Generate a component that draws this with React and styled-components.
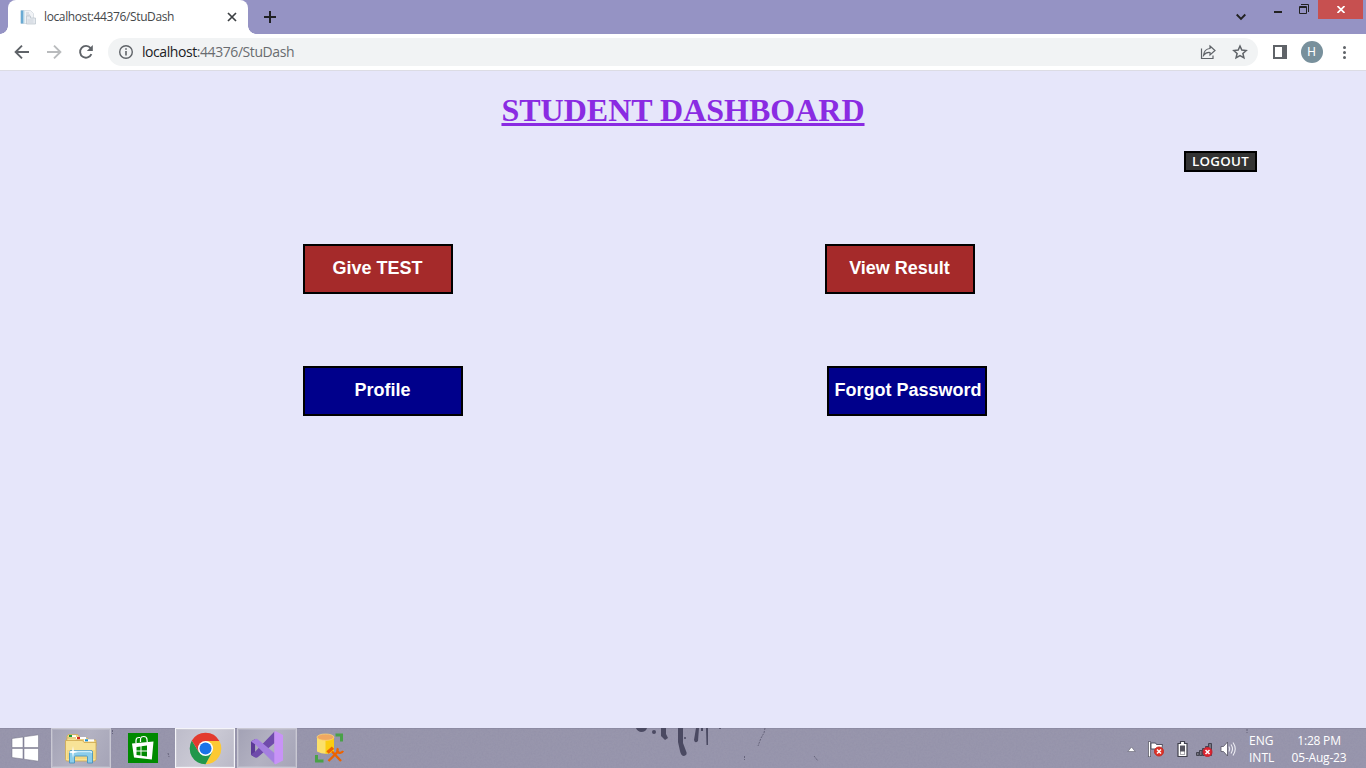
import React from "react";
import styled, { createGlobalStyle } from "styled-components";

const GlobalStyle = createGlobalStyle`
  * { box-sizing: border-box; }
  html, body { margin: 0; padding: 0; overflow: hidden; }
  body { background: #e6e6fa; }
  svg { display: block; flex: none; }
`;

const uiFont = `"Open Sans", "Noto Sans", sans-serif`;

const Screen = styled.div`
  width: 1366px;
  height: 768px;
  display: flex;
  flex-direction: column;
  overflow: hidden;
`;

/* Browser window */
const TabStrip = styled.header`
  height: 34px;
  display: flex;
  background: #9593c4;
  padding-left: 8px;
`;

const Tab = styled.div`
  position: relative;
  width: 240px;
  height: 34px;
  background: #fff;
  border-radius: 8px 8px 0 0;
  display: flex;
  align-items: center;
  padding: 0 10px 0 12px;
  &::before, &::after {
    content: "";
    position: absolute;
    bottom: 0;
    width: 8px;
    height: 8px;
  }
  &::before {
    left: -8px;
    background: radial-gradient(circle at 0 0, transparent 7.5px, #fff 8px);
  }
  &::after {
    right: -8px;
    background: radial-gradient(circle at 100% 0, transparent 7.5px, #fff 8px);
  }
`;

const TabTitle = styled.span`
  flex: 1;
  margin-left: 8px;
  font: 12px/16px ${uiFont};
  letter-spacing: -0.38px;
  color: #45474a;
  white-space: nowrap;
`;

const NewTab = styled.div`
  margin: 10px 0 0 15px;
`;

const WindowControls = styled.div`
  margin-left: auto;
  display: flex;
  align-items: flex-start;
`;

const TabSearch = styled.div`
  padding: 13px 28px 0 0;
`;

const Minimize = styled.div`
  width: 8px;
  height: 2px;
  margin: 11px 17px 0 0;
  background: #222;
`;

const Restore = styled.div`
  margin: 4px 9px 0 0;
`;

const CloseWindow = styled.div`
  width: 45px;
  height: 19px;
  margin-right: 3px;
  background: #c75050;
  display: flex;
  align-items: center;
  justify-content: center;
`;

const Toolbar = styled.div`
  height: 37px;
  background: #fff;
  border-bottom: 1px solid #dcdce4;
  display: flex;
  align-items: center;
  padding: 0 12px 0 12px;
`;

const NavButtons = styled.div`
  display: flex;
  gap: 12px;
  width: 96px;
`;

const AddressBar = styled.div`
  width: 1150px;
  height: 28px;
  border-radius: 14px;
  background: #f1f3f4;
  display: flex;
  align-items: center;
  padding: 0 10px 0 10px;
`;

const Url = styled.span`
  flex: 1;
  margin-left: 8px;
  font: 14px/20px ${uiFont};
  letter-spacing: -0.43px;
  color: #696c70;
  b { font-weight: 400; color: #202124; }
`;

const AddressActions = styled.div`
  display: flex;
  gap: 16px;
`;

const ToolbarActions = styled.div`
  flex: 1;
  display: flex;
  align-items: center;
  justify-content: space-between;
  margin: 0 2px 0 14px;
`;

const Avatar = styled.div`
  width: 22px;
  height: 22px;
  border-radius: 50%;
  background: #78909c;
  color: #fff;
  font: 12px/22px Roboto, sans-serif;
  text-align: center;
`;

/* Web page */
const Page = styled.main`
  height: 657px;
  background: #e6e6fa;
  display: flex;
  flex-direction: column;
`;

const Title = styled.h1`
  margin: 21px 0 0;
  text-align: center;
  font: bold 32px/37px "Liberation Serif", serif;
  color: blueviolet;
  text-decoration: underline;
  text-decoration-thickness: 3px;
`;

const LogoutRow = styled.div`
  display: flex;
  justify-content: flex-end;
  margin-top: 22px;
  padding-right: 109px;
`;

const LogoutButton = styled.button`
  width: 73px;
  height: 21px;
  padding: 0;
  border: 2px solid #000;
  background: #333;
  color: #fff;
  font: 600 13.33px/17px ${uiFont};
  letter-spacing: 0.3px;
  white-space: nowrap;
`;

const ButtonRow = styled.div`
  display: flex;
  gap: ${(p) => p.$gap}px;
  margin-top: 72px;
  padding-left: 303px;
`;

const MenuButton = styled.button`
  width: ${(p) => p.$width}px;
  height: 50px;
  padding: 0 ${(p) => (p.$wide ? "0 2px 2px" : "1px 2px 0")};
  border: 2px solid #000;
  background: ${(p) => p.$color};
  color: #fff;
  font: bold 18px/21px "Liberation Sans", Arial, sans-serif;
  white-space: nowrap;
`;

/* Taskbar */
const TaskbarRoot = styled.footer`
  position: relative;
  height: 40px;
  background: linear-gradient(#84829a 0, #9896ac 1px, #9896ad 100%);
  display: flex;
`;

const Wallpaper = styled.svg`
  position: absolute;
  inset: 0;
`;

const AppList = styled.div`
  position: relative;
  display: flex;
  gap: 2px;
`;

const AppSlot = styled.div`
  width: ${(p) => p.$width || 60}px;
  height: 40px;
  display: flex;
  align-items: center;
  justify-content: center;
  border: ${(p) => (p.$state ? "1px solid" : "0 solid")};
  border-color: ${(p) => (p.$state === "active" ? "#f4f4f8" : "#c9c8d3")};
  box-shadow: ${(p) => (p.$state ? "inset 0 0 0 1px rgba(255,255,255,.15)" : "none")};
  background: ${(p) =>
    p.$state === "active"
      ? "linear-gradient(120deg, #bdbcca, #cbcad5 50%, #bab9c7)"
      : p.$state === "open"
      ? "linear-gradient(120deg, #a3a2b5, #b3b2c2 50%, #a5a4b7)"
      : "transparent"};
`;

const Tray = styled.div`
  position: relative;
  margin-left: auto;
  display: flex;
  align-items: center;
  color: #fff;
  font: 12px/17px ${uiFont};
  text-align: center;
  white-space: nowrap;
`;

const TrayIcons = styled.div`
  width: 122px;
  height: 40px;
`;

const Language = styled.div`
  width: 26px;
  display: flex;
  flex-direction: column;
  align-items: flex-start;
  margin-top: 1px;
`;

const Clock = styled.div`
  width: 60px;
  display: flex;
  flex-direction: column;
  align-items: center;
  margin: 1px 17px 0 14px;
  letter-spacing: -0.2px;
`;

function FileIcon() {
  return (
    <svg width="16" height="16" viewBox="0 0 16 16">
      <path d="M1 1.5h9.5l3 3v10H1z" fill="#f1f3f6" stroke="#d3d9e0" strokeWidth=".8" />
      <path d="M.8 1.5h2.8v13H.8z" fill="#69aad3" />
      <path d="M3.6 1.5h1.2v13H3.6z" fill="#cce2ee" />
      <path d="M6 4h3M6 6h4" stroke="#c4cbd5" />
      <path d="M6.5 7h4v2h5v6h-9z" fill="#e6eaef" stroke="#b8c1ca" strokeWidth=".7" />
      <path d="M7.5 11h6M7.5 13h6" stroke="#c9d0d9" strokeWidth=".8" />
    </svg>
  );
}

function NavIcon({ path, color = "#5f6368" }) {
  return (
    <svg width="20" height="20" viewBox="0 0 20 20" fill="none" stroke={color} strokeWidth="1.9">
      <path d={path} />
    </svg>
  );
}

function ReloadIcon() {
  return (
    <svg width="20" height="20" viewBox="0 0 20 20">
      <path d="M15.4 12.2A5.9 5.9 0 1 1 14.6 6.1" fill="none" stroke="#5f6368" strokeWidth="1.9" />
      <path d="M16.8 3v6h-6z" fill="#5f6368" />
    </svg>
  );
}

function FolderIcon() {
  return (
    <svg width="34" height="32" viewBox="0 0 34 32">
      <path d="M3 4l1.5-1.5h9L15 4v6H3z" fill="#f0d583" stroke="#cfab55" strokeWidth=".7" />
      <path d="M5 3.2h7v2H5z" fill="#fff" /><path d="M5 3h3v2H5z" fill="#169c3b" />
      <path d="M3 6h21v5H3z" fill="#f5df93" stroke="#cfab55" strokeWidth=".6" />
      <path d="M12 5h10v2.2H12z" fill="#fff" /><path d="M13 5h3v2.2h-3z" fill="#d52b1e" />
      <path d="M12 8h20v6H12z" fill="#f0d583" stroke="#cfab55" strokeWidth=".7" />
      <path d="M20 7.3h10v2.2H20z" fill="#fff" /><path d="M21 7.3h3v2h-3z" fill="#168bd2" />
      <path d="M1.5 8.5h17l1.5 2h12v17l-1 1.5H2.5l-1-1.5z" fill="#f8e397" stroke="#cfa84e" strokeWidth=".8" />
      <path d="M3 18h28v9H3z" fill="#f0cf72" opacity=".6" />
      <path d="M5.5 31V20q0-1.5 1.5-1.5h20q1.5 0 1.5 1.5v11h-5v-6q0-1-1-1H11.500q-1 0-1 1v6z" fill="#8bcdea" stroke="#4594be" strokeWidth=".9" />
      <path d="M6.5 21q0-1.500 1.500-1.500h18.500q1 0 1 1.500" fill="none" stroke="#d0effa" strokeWidth="1.500" />
      <path d="M9 14l.8 5 4.200 1-4.200 1L9 26l-.8-5L4 20l4.200-1z" fill="#fff" />
    </svg>
  );
}

function StoreIcon() {
  return (
    <svg width="30" height="30" viewBox="0 0 30 30">
      <path d="M0 0h30v30H0z" fill="#008a00" />
      <path d="M8 10V7.500Q8 4.500 11 4.500h1M12.500 9V6.500q0-3 3.200-3t3.300 3l.3 3" fill="none" stroke="#fff" strokeWidth="1.200" />
      <path d="M4 10.500l21.500-2-1.700 18L6 24.500z" fill="#fff" />
      <path d="M8.500 14l4-.6v4.100h-4zM13.500 13.200l5.500-.8v5.100h-5.500zM8.500 18.400h4v4.100l-4-.5zM13.500 18.400H19v5l-5.500-.7z" fill="#008a00" />
    </svg>
  );
}

function ChromeIcon() {
  return (
    <svg width="33" height="33" viewBox="0 0 48 48">
      <path d="M24 13h20.200A23 23 0 0 1 24 47l9.500-17.500z" fill="#fcc934" />
      <path d="M14.500 29.500L4.100 12.500A23 23 0 0 0 24 47l9.500-17.500z" fill="#21974b" />
      <path d="M4.100 12.500A23 23 0 0 1 44.200 13H24L14.500 29.500z" fill="#e33b2e" />
      <circle cx="24" cy="24" r="11" fill="#fff" />
      <circle cx="24" cy="24" r="8.800" fill="#1a73e8" />
    </svg>
  );
}

function VisualStudioIcon() {
  return (
    <svg width="34" height="34" viewBox="0 0 34 34">
      <path d="M1 10.600L5.300 8v18.500L1 24z" fill="#5b3a97" />
      <path d="M5.300 13.500l4 3.800-4 4z" fill="#abaabc" />
      <path d="M1 23.500l4.300 3q1.500.5 3-.7L24.500 12V.5L5.300 20.500z" fill="#6f4bab" />
      <path d="M1 10.600L5.300 8q1.500-.5 3 .7L25 22.500V33L5.300 13.500z" fill="#a47fe0" />
      <path d="M24.300.5q.7-.5 1.500-.2L33 4v25.500l-7.200 3.700q-1 .3-1.500-.4z" fill="#c893f7" />
    </svg>
  );
}

function DatabaseIcon() {
  return (
    <svg width="32" height="32" viewBox="0 0 32 32">
      <path d="M22.500 3h6v6.500M3.500 23v6h7" fill="none" stroke="#49a147" strokeWidth="3" />
      <path d="M4 5v14.500q8.500 4.500 17 0V5z" fill="#fbe06a" />
      <path d="M12.500 5H21v14.500q-4 2.200-8.500 2.200z" fill="#fbcc10" />
      <ellipse cx="12.500" cy="5.200" rx="8.500" ry="3.200" fill="#f0a862" stroke="#ffda76" strokeWidth=".7" />
      <g fill="none" stroke="#ed6300">
        <path d="M19 19.500l9 9.500M25.500 19L15.500 29" strokeWidth="2.400" />
        <path d="M14.500 20.500l5.500-4.800" strokeWidth="3.400" />
        <path d="M25 16.200q-1.600 3.300.8 4.500 3 1 4.200-1.800" strokeWidth="2.200" />
      </g>
    </svg>
  );
}

function TrayGlyphs() {
  return (
    <svg width="122" height="40" viewBox="1127 728 122 40">
      <path d="M1127.800 751.500l3.700-4.500 3.700 4.500z" fill="#fff" stroke="#62616f" strokeWidth=".6" />
      <path d="M1149.500 741.500V757" stroke="#494957" strokeWidth="3" />
      <path d="M1149.500 742v14.500" stroke="#fff" strokeWidth="1.500" />
      <path d="M1151 743h4.500l1 1.500h6q-1 3 0 6h-5l-1-1.500H1151z" fill="#fff" stroke="#464655" strokeWidth=".9" />
      <path d="M1180.500 741.500h4v2h2.500v13h-9v-13h2.500z" fill="#fff" stroke="#41414d" strokeWidth="1.200" />
      <path d="M1180 745.500h5v9h-5z" fill="#55545f" />
      <path d="M1180.500 751.500h4v2.500h-4z" fill="#fff" />
      <path d="M1196.500 752.500h2.500v3h-2.500zM1199.500 750.500h2.500v5h-2.500zM1202.500 748.500h2.500v7h-2.500zM1205.500 746.500h2.500v9h-2.500zM1208.500 743.500h3v12h-3z" fill="#777681" stroke="#444451" />
      <g stroke="#fff" strokeWidth="1.500">
        <circle cx="1159" cy="751.500" r="4.500" fill="#df3226" stroke="#c62b25" strokeWidth="1" />
        <path d="M1157 749.500l4 4m0-4l-4 4" />
        <circle cx="1207.500" cy="752" r="4.500" fill="#df2430" stroke="#c62430" strokeWidth="1" />
        <path d="M1205.500 750l4 4m0-4l-4 4" />
      </g>
      <path d="M1221 746.500h2.500l4-4.500v14l-4-4.500h-2.500z" fill="#fff" stroke="#555463" strokeWidth=".8" />
      <path d="M1229 746.500q1.500 2.500 0 5m2-7q3 4.500 0 9m2-11q4.500 6.500 0 13" fill="none" stroke="#eeeef4" strokeWidth="1.100" />
    </svg>
  );
}

function PaperTexture() {
  return (
    <Wallpaper width="1366" height="40" viewBox="0 0 1366 40">
      <filter id="grain">
        <feTurbulence type="fractalNoise" baseFrequency=".55" numOctaves="2" seed="4" />
        <feColorMatrix values="0 0 0 0 .25  0 0 0 0 .24  0 0 0 0 .36  .45 .45 0 0 -.36" />
      </filter>
      <rect width="1366" height="40" filter="url(#grain)" opacity=".8" />
      <g fill="#4b4a62">
        <path d="M636 0h11q-1 4-6 4-4-1-5-4zM678 0h5v15l3 8q2 4-2 5-3 0-4-5l-2-9z" />
        <circle cx="654" cy="4" r="2" />
        <path d="M661 0h5v6l2 4-3 2-4-4zM696 0h3l-1 13q-3 3-4-1zM701 0h2v3h-2zM706 0h2v17h-1.500z" />
        <circle cx="685" cy="10" r="1" /><circle cx="720" cy="0" r="1" />
      </g>
      <path d="M765 0l-1 5-3 5-3 8M744.500 28v4M814 28l4 5M168 25l1 4M112.500 2v4M1247 1v4" fill="none" stroke="#66647b" strokeDasharray="2 1" />
    </Wallpaper>
  );
}

function Browser() {
  return (
    <>
      <TabStrip>
        <Tab>
          <FileIcon />
          <TabTitle>localhost:44376/StuDash</TabTitle>
          <svg width="12" height="12" viewBox="0 0 12 12"><path d="M2 2l8 8m0-8l-8 8" stroke="#3c4043" strokeWidth="1.700" /></svg>
        </Tab>
        <NewTab>
          <svg width="14" height="14" viewBox="0 0 14 14"><path d="M7 1v12M1 7h12" stroke="#202124" strokeWidth="2" /></svg>
        </NewTab>
        <WindowControls>
          <TabSearch><svg width="10" height="8" viewBox="0 0 10 8"><path d="M.7 1.500L5 5.800l4.300-4.300" fill="none" stroke="#222" strokeWidth="1.900" /></svg></TabSearch>
          <Minimize />
          <Restore><svg width="10" height="10" viewBox="0 0 10 10" fill="none" stroke="#222"><path d="M2 .5h7.500V8M.5 2.500h7v7h-7zM.5 3.500h7" /></svg></Restore>
          <CloseWindow><svg width="8" height="7" viewBox="0 0 8 7"><path d="M.5 0l7 7m0-7l-7 7" stroke="#fff" strokeWidth="1.700" /></svg></CloseWindow>
        </WindowControls>
      </TabStrip>
      <Toolbar>
        <NavButtons>
          <NavIcon path="M17 10H4M10 3.600L3.600 10l6.400 6.400" />
          <NavIcon path="M3 10h13M10 3.600l6.400 6.400-6.400 6.400" color="#b9bbbd" />
          <ReloadIcon />
        </NavButtons>
        <AddressBar>
          <svg width="16" height="16" viewBox="0 0 16 16"><circle cx="8" cy="8" r="6.300" fill="none" stroke="#5f6368" strokeWidth="1.400" /><path d="M8 7v4.500M8 4.200v1.600" stroke="#5f6368" strokeWidth="1.600" /></svg>
          <Url><b>localhost</b>:44376/StuDash</Url>
          <AddressActions>
            <svg width="16" height="16" viewBox="0 0 16 16" fill="none" stroke="#5f6368" strokeWidth="1.200"><path d="M1.500 4.500v10H13v-3M10 2l5 4.500-5 4.500V8.500Q6 8 3.500 11.500 4 5 10 4.500z" /></svg>
            <svg width="16" height="16" viewBox="0 0 16 16" fill="none" stroke="#5f6368" strokeWidth="1.500"><path d="M8 2l1.800 4 4.400.5-3.300 3 1 4.300L8 11.500l-3.900 2.300 1-4.300-3.300-3L6.200 6z" /></svg>
          </AddressActions>
        </AddressBar>
        <ToolbarActions>
          <svg width="15" height="14" viewBox="0 0 15 14"><path d="M1 0h14v14H1zM3 2v10h7V2z" fillRule="evenodd" fill="#5f6368" /></svg>
          <Avatar>H</Avatar>
          <svg width="16" height="16" viewBox="0 0 16 16" fill="#5f6368"><circle cx="8.500" cy="3.500" r="1.500" /><circle cx="8.500" cy="8.500" r="1.500" /><circle cx="8.500" cy="13.500" r="1.500" /></svg>
        </ToolbarActions>
      </Toolbar>
    </>
  );
}

function Dashboard() {
  return (
    <Page>
      <Title>STUDENT DASHBOARD</Title>
      <LogoutRow><LogoutButton>LOGOUT</LogoutButton></LogoutRow>
      <ButtonRow $gap={372}>
        <MenuButton $width={150} $color="brown">Give TEST</MenuButton>
        <MenuButton $width={150} $color="brown">View Result</MenuButton>
      </ButtonRow>
      <ButtonRow $gap={364}>
        <MenuButton $width={160} $color="darkblue">Profile</MenuButton>
        <MenuButton $width={160} $color="darkblue" $wide>Forgot Password</MenuButton>
      </ButtonRow>
    </Page>
  );
}

function Taskbar() {
  return (
    <TaskbarRoot>
      <PaperTexture />
      <AppList>
        <AppSlot $width={49}>
          <svg width="28" height="28" viewBox="0 0 28 28"><path d="M1 4.500l11-1.500v10.500H1zM13 2.800L27.500.8v12.700H13zM1 14.500h11V25L1 23.500zM13 14.500h14.500v12.700L13 25.200z" fill="#fff" stroke="#6f6e80" strokeWidth=".5" /></svg>
        </AppSlot>
        <AppSlot $state="open"><FolderIcon /></AppSlot>
        <AppSlot><StoreIcon /></AppSlot>
        <AppSlot $state="active"><ChromeIcon /></AppSlot>
        <AppSlot $state="open"><VisualStudioIcon /></AppSlot>
        <AppSlot><DatabaseIcon /></AppSlot>
      </AppList>
      <Tray>
        <TrayIcons><TrayGlyphs /></TrayIcons>
        <Language><span>ENG</span><span>INTL</span></Language>
        <Clock><span>1:28 PM</span><span>05-Aug-23</span></Clock>
      </Tray>
    </TaskbarRoot>
  );
}

export default function App() {
  return (
    <Screen>
      <GlobalStyle />
      <Browser />
      <Dashboard />
      <Taskbar />
    </Screen>
  );
}
